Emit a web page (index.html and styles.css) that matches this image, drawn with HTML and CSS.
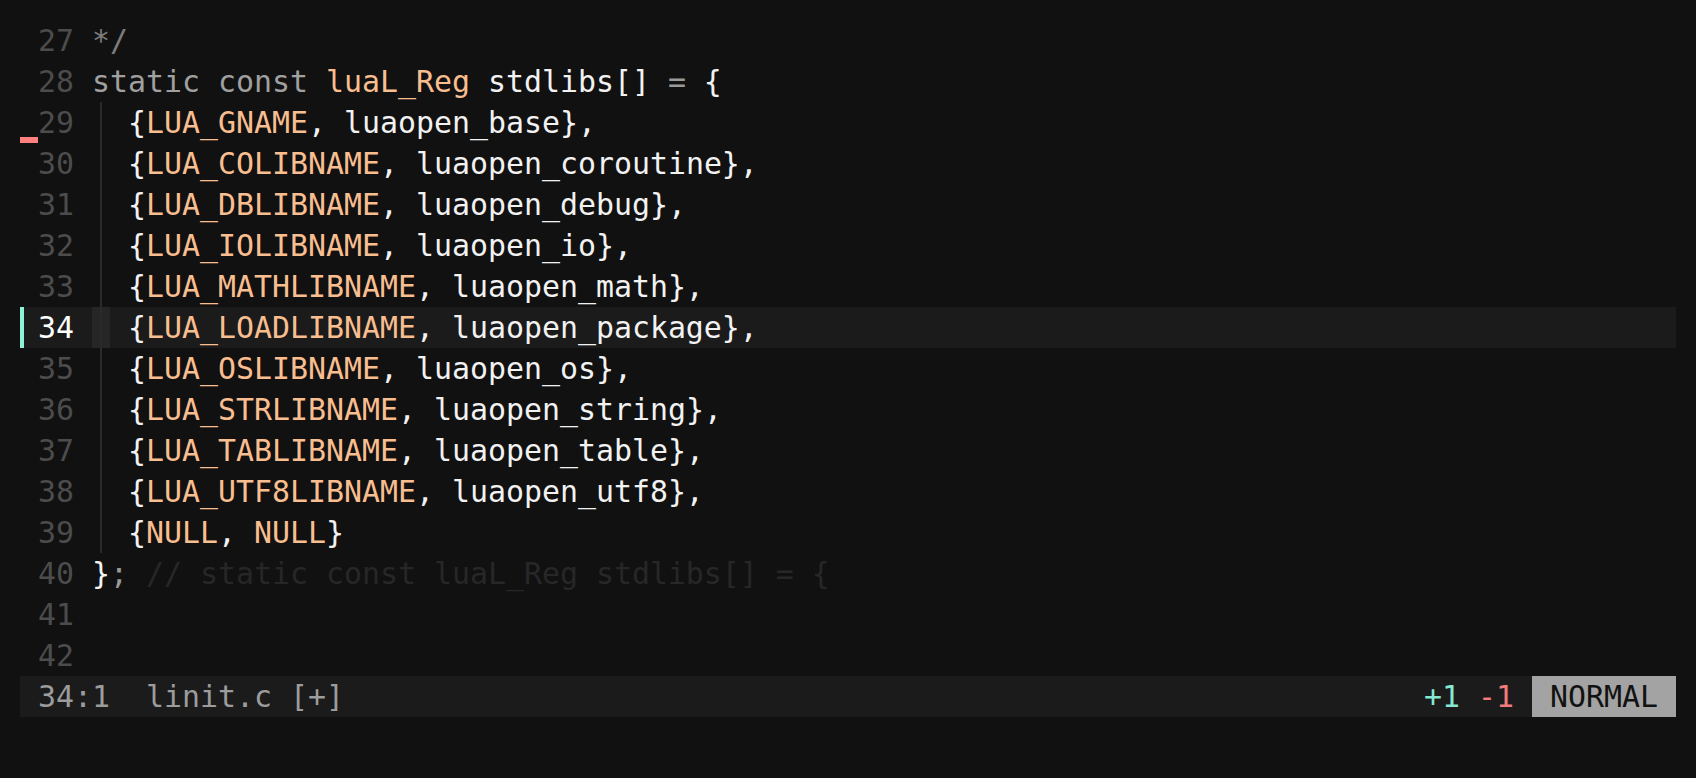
FILE: index.html
```html
<!DOCTYPE html>
<html>
<head>
<meta charset="utf-8">
<link rel="stylesheet" href="styles.css">
</head>
<body>
<div class="editor">
  <div class="row"><span class="sign"></span><span class="num">27</span><span class="code"><span class="cm">*/</span></span></div>
  <div class="row"><span class="sign"></span><span class="num">28</span><span class="code"><span class="kw">static const</span> <span class="ty">luaL_Reg</span> stdlibs[] <span class="op">=</span> {</span></div>
  <div class="row"><span class="sign del"></span><span class="num">29</span><span class="code"><span class="indent"><span class="guide"></span></span>{<span class="ty">LUA_GNAME</span>, luaopen_base},</span></div>
  <div class="row"><span class="sign"></span><span class="num">30</span><span class="code"><span class="indent"><span class="guide"></span></span>{<span class="ty">LUA_COLIBNAME</span>, luaopen_coroutine},</span></div>
  <div class="row"><span class="sign"></span><span class="num">31</span><span class="code"><span class="indent"><span class="guide"></span></span>{<span class="ty">LUA_DBLIBNAME</span>, luaopen_debug},</span></div>
  <div class="row"><span class="sign"></span><span class="num">32</span><span class="code"><span class="indent"><span class="guide"></span></span>{<span class="ty">LUA_IOLIBNAME</span>, luaopen_io},</span></div>
  <div class="row"><span class="sign"></span><span class="num">33</span><span class="code"><span class="indent"><span class="guide"></span></span>{<span class="ty">LUA_MATHLIBNAME</span>, luaopen_math},</span></div>
  <div class="row current"><span class="sign add"></span><span class="num">34</span><span class="code"><span class="indent"><span class="guide cursor"></span></span>{<span class="ty">LUA_LOADLIBNAME</span>, luaopen_package},</span></div>
  <div class="row"><span class="sign"></span><span class="num">35</span><span class="code"><span class="indent"><span class="guide"></span></span>{<span class="ty">LUA_OSLIBNAME</span>, luaopen_os},</span></div>
  <div class="row"><span class="sign"></span><span class="num">36</span><span class="code"><span class="indent"><span class="guide"></span></span>{<span class="ty">LUA_STRLIBNAME</span>, luaopen_string},</span></div>
  <div class="row"><span class="sign"></span><span class="num">37</span><span class="code"><span class="indent"><span class="guide"></span></span>{<span class="ty">LUA_TABLIBNAME</span>, luaopen_table},</span></div>
  <div class="row"><span class="sign"></span><span class="num">38</span><span class="code"><span class="indent"><span class="guide"></span></span>{<span class="ty">LUA_UTF8LIBNAME</span>, luaopen_utf8},</span></div>
  <div class="row"><span class="sign"></span><span class="num">39</span><span class="code"><span class="indent"><span class="guide"></span></span>{<span class="ty">NULL</span>, <span class="ty">NULL</span>}</span></div>
  <div class="row"><span class="sign"></span><span class="num">40</span><span class="code">}<span class="op">;</span> <span class="virt">// static const luaL_Reg stdlibs[] = {</span></span></div>
  <div class="row"><span class="sign"></span><span class="num">41</span><span class="code"></span></div>
  <div class="row"><span class="sign"></span><span class="num">42</span><span class="code"></span></div>
  <div class="status"><span class="st-left">34:1  linit.c [+]</span><span class="st-right"><span class="d-add">+1</span> <span class="d-del">-1</span> <span class="mode">NORMAL</span></span></div>
</div>
</body>
</html>
```
FILE: styles.css
```css
html, body {
  margin: 0;
  padding: 0;
  background: #111111;
}
body {
  width: 1696px;
  height: 778px;
  overflow: hidden;
}
.editor {
  padding: 20px;
  font-family: "DejaVu Sans Mono", "Liberation Mono", monospace;
  font-size: 29.9px;
  color: #f2f2f2;
}
.row {
  display: flex;
  height: 41px;
  line-height: 41px;
}
.row.current {
  background: #1b1b1b;
}
.sign {
  width: 18px;
  flex: none;
  position: relative;
}
.sign.del::after {
  content: "";
  position: absolute;
  left: 0;
  bottom: 0;
  width: 18px;
  height: 6px;
  background: #ff8080;
}
.sign.add::after {
  content: "";
  position: absolute;
  left: 0;
  top: 0;
  width: 4px;
  height: 100%;
  background: #8ef2d9;
}
.num {
  width: 36px;
  flex: none;
  text-align: right;
  color: #4c4c4c;
  margin-right: 18px;
}
.current .num {
  color: #ffffff;
}
.code {
  display: block;
  flex: 1;
  white-space: pre;
}
.indent {
  display: inline-block;
  vertical-align: top;
  width: 36px;
  height: 41px;
}
.guide {
  display: block;
  width: 18px;
  height: 41px;
  position: relative;
}
.guide::before {
  content: "";
  position: absolute;
  left: 8px;
  top: 0;
  width: 2px;
  height: 100%;
  background: #2a2a2a;
}
.guide.cursor {
  background: #262626;
}
.cm { color: #7c7c7c; }
.kw { color: #a0a0a0; }
.ty { color: #f9be90; }
.op { color: #9a9a9a; }
.virt { color: #272727; }
.status {
  display: flex;
  justify-content: space-between;
  height: 41px;
  line-height: 41px;
  background: #1b1b1b;
  white-space: pre;
}
.st-left {
  padding-left: 18px;
  color: #9c9c9c;
}
.d-add { color: #86e8cf; }
.d-del { color: #f27b7b; }
.mode {
  display: inline-block;
  background: #a3a3a3;
  color: #121212;
  padding: 0 18px;
}
```
